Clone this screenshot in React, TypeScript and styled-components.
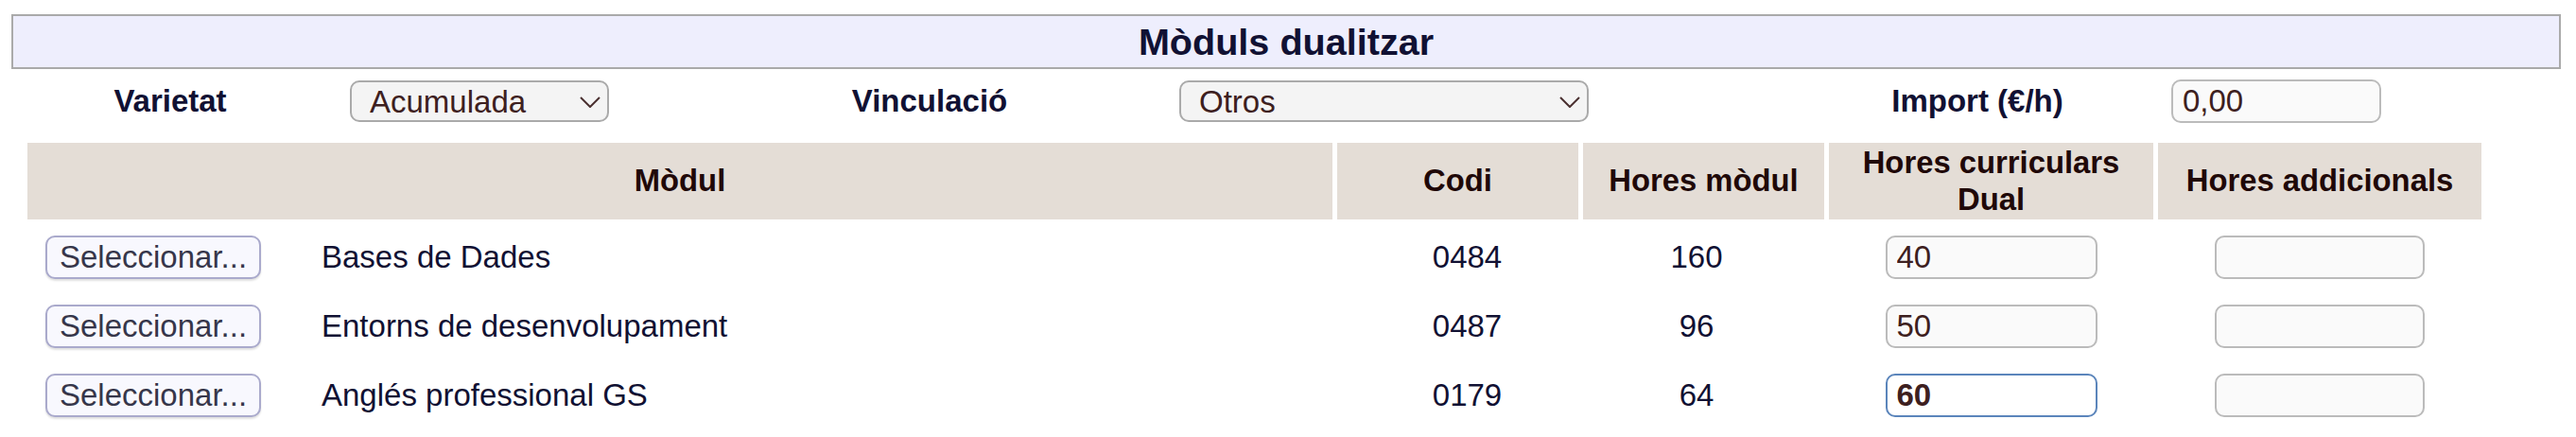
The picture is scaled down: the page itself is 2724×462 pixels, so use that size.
import { createGlobalStyle, css } from 'styled-components';
import styled from 'styled-components';

const GlobalStyle = createGlobalStyle`
  body {
    margin: 0;
    background: #fff;
    font-family: "Liberation Sans", Arial, Helvetica, sans-serif;
    font-size: 33px;
    color: #111133;
  }
`;

const Page = styled.div`
  padding: 15px 16px 0 12px;
`;

const TitleBar = styled.div`
  height: 58px;
  box-sizing: border-box;
  border: 2px solid #aaaaaa;
  background: #eeeefd;
  text-align: center;
  font-size: 39.6px;
  font-weight: bold;
  line-height: 54px;
  color: #111133;
`;

const FilterRow = styled.div`
  display: grid;
  grid-template-columns: 336px 372px 526px 654px 382px 1fr;
  height: 68px;
  margin-bottom: 10px;
  align-items: center;
`;

const FilterLabel = styled.div`
  text-align: center;
  font-weight: bold;
  font-size: 33px;
  color: #111133;
`;

const FilterCell = styled.div<{ $pad: number }>`
  padding-left: ${p => p.$pad}px;
  display: flex;
  align-items: center;
`;

const SelectWrap = styled.div<{ $w: number }>`
  position: relative;
  width: ${p => p.$w}px;
  height: 44px;
`;

const Select = styled.select`
  appearance: none;
  width: 100%;
  height: 100%;
  box-sizing: border-box;
  border: 2px solid #aaaaaa;
  border-radius: 10px;
  background: #f4f4f4;
  color: #3d2020;
  font-family: inherit;
  font-size: 33px;
  padding: 0 40px 0 19px;
  outline: none;
`;

const Chevron = styled.svg`
  position: absolute;
  right: 9px;
  top: 17px;
  pointer-events: none;
`;

const TextInput = styled.input<{ $w: number; $focus?: boolean }>`
  width: ${p => p.$w}px;
  height: 46px;
  box-sizing: border-box;
  border: 2px solid ${p => (p.$focus ? '#5b85bb' : '#bbbbbb')};
  border-radius: 10px;
  background: ${p => (p.$focus ? '#ffffff' : '#fafafa')};
  color: #3d2020;
  font-family: inherit;
  font-size: 33px;
  font-weight: ${p => (p.$focus ? 'bold' : 'normal')};
  padding: 0 10px;
  outline: none;
`;

const columns = css`
  display: grid;
  grid-template-columns: 306px 1069px 255px 255px 343px 342px;
  column-gap: 5px;
  margin-left: 17px;
`;

const HeaderRow = styled.div`
  ${columns}
  height: 81px;
`;

const HeadCell = styled.div<{ $span?: number }>`
  grid-column: span ${p => p.$span || 1};
  background: #e4ddd6;
  color: #200808;
  font-weight: bold;
  font-size: 32.8px;
  display: flex;
  align-items: center;
  justify-content: center;
  text-align: center;
  line-height: 1.18;
`;

const Body = styled.div`
  margin-top: 3px;
`;

const Row = styled.div`
  ${columns}
  height: 73px;
  align-items: center;
`;

const Cell = styled.div<{ $align?: string; $pl?: number; $pr?: number }>`
  display: flex;
  justify-content: ${p => p.$align || 'center'};
  padding-left: ${p => p.$pl || 0}px;
  padding-right: ${p => p.$pr || 0}px;
  color: #111133;
`;

const PickButton = styled.button`
  margin-left: 19px;
  width: 228px;
  height: 46px;
  box-sizing: border-box;
  border: 2px solid #aaaacc;
  border-radius: 10px;
  background: #f8f8fe;
  color: #36364a;
  font-family: inherit;
  font-size: 33px;
  padding: 0;
  box-shadow: 0 2px 2px rgba(0, 0, 0, 0.12);
`;

const moduls = [
  { nom: 'Bases de Dades', codi: '0484', hores: '160', dual: '40' },
  { nom: 'Entorns de desenvolupament', codi: '0487', hores: '96', dual: '50' },
  { nom: 'Anglés professional GS', codi: '0179', hores: '64', dual: '60', focus: true },
];

function Dropdown({ width, value }: { width: number; value: string }) {
  return (
    <SelectWrap $w={width}>
      <Select defaultValue={value}>
        <option>{value}</option>
      </Select>
      <Chevron width="22" height="12" viewBox="0 0 22 12">
        <path d="M1 1 L11 11 L21 1" fill="none" stroke="#4a3030" strokeWidth="2" />
      </Chevron>
    </SelectWrap>
  );
}

export default function App() {
  return (
    <>
      <GlobalStyle />
      <Page>
        <TitleBar>Mòduls dualitzar</TitleBar>
        <FilterRow>
          <FilterLabel>Varietat</FilterLabel>
          <FilterCell $pad={22}>
            <Dropdown width={274} value="Acumulada" />
          </FilterCell>
          <FilterLabel>Vinculació</FilterLabel>
          <FilterCell $pad={1}>
            <Dropdown width={433} value="Otros" />
          </FilterCell>
          <FilterLabel>Import (€/h)</FilterLabel>
          <FilterCell $pad={14}>
            <TextInput $w={222} defaultValue="0,00" />
          </FilterCell>
        </FilterRow>
        <HeaderRow>
          <HeadCell $span={2}>Mòdul</HeadCell>
          <HeadCell>Codi</HeadCell>
          <HeadCell>Hores mòdul</HeadCell>
          <HeadCell>Hores curriculars<br />Dual</HeadCell>
          <HeadCell>Hores addicionals</HeadCell>
        </HeaderRow>
        <Body>
          {moduls.map(m => (
            <Row key={m.codi}>
              <Cell $align="flex-start">
                <PickButton>Seleccionar...</PickButton>
              </Cell>
              <Cell $align="flex-start">{m.nom}</Cell>
              <Cell $pl={20}>{m.codi}</Cell>
              <Cell $pr={15}>{m.hores}</Cell>
              <Cell>
                <TextInput $w={224} $focus={m.focus} defaultValue={m.dual} />
              </Cell>
              <Cell>
                <TextInput $w={222} defaultValue="" />
              </Cell>
            </Row>
          ))}
        </Body>
      </Page>
    </>
  );
}
